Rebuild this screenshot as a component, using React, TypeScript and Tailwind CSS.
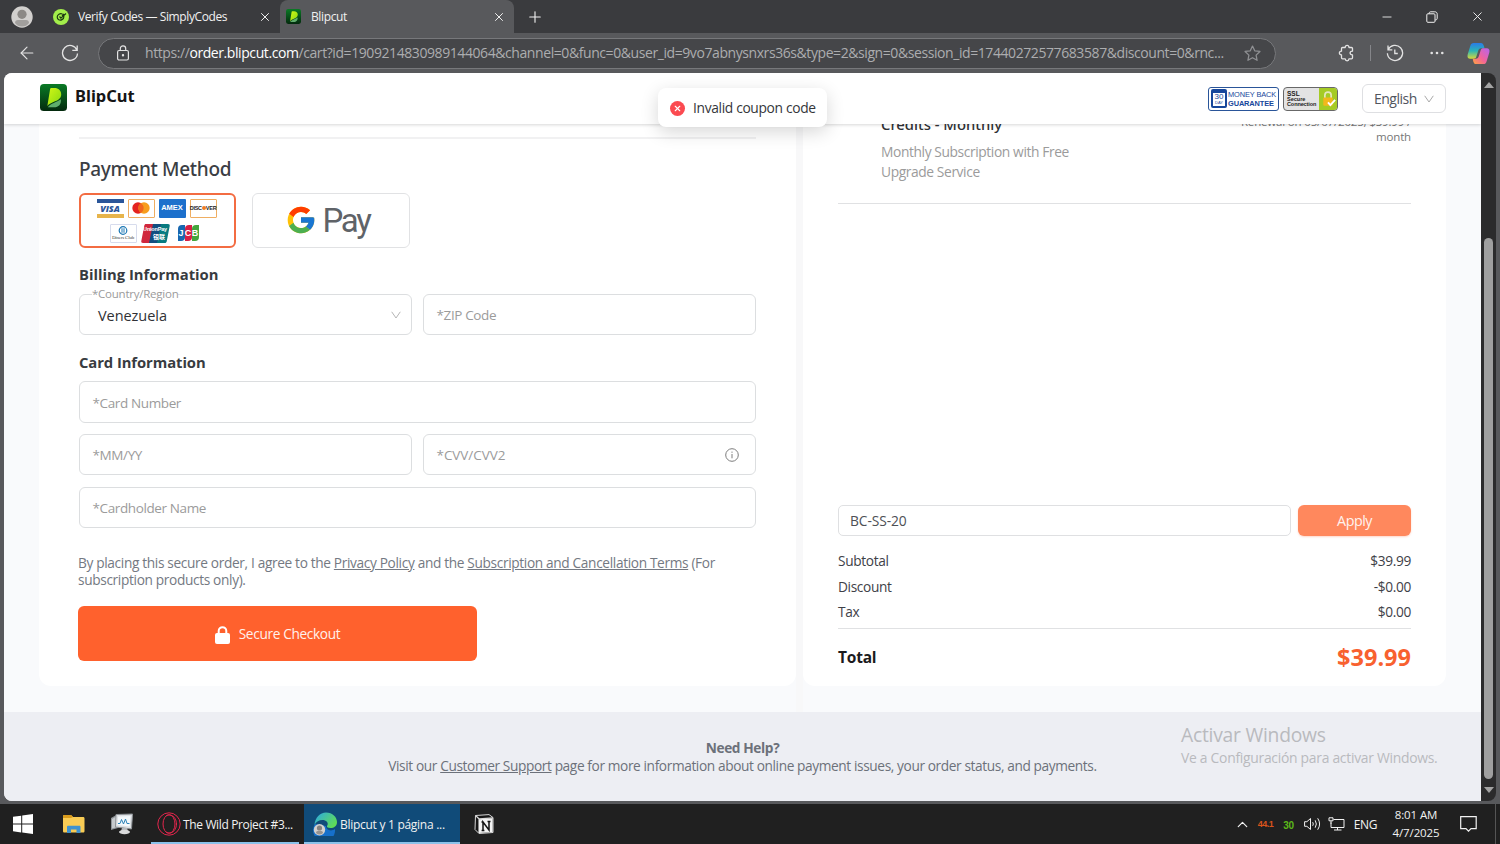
import type { ReactNode } from "react"
import { ArrowLeft, ChevronUp, Minus, Plus, X } from "lucide-react"
import { FcGoogle } from "react-icons/fc"

function BlipcutLogo({ className }: { className?: string }) {
  return (
    <svg viewBox="0 0 28 28" className={className}>
      <defs>
        <linearGradient id="logo-bg" x1="0" y1="0" x2="0" y2="1">
          <stop offset="0" stopColor="#0a7a25" />
          <stop offset="1" stopColor="#03290d" />
        </linearGradient>
        <linearGradient id="logo-leaf" x1="0" y1="0" x2="1" y2="1">
          <stop offset="0" stopColor="#d2f716" />
          <stop offset="1" stopColor="#86d911" />
        </linearGradient>
      </defs>
      <rect width="28" height="28" rx="4" fill="url(#logo-bg)" />
      <path d="M10.500 5.200c.1-.7.5-1 1.200-1h3.300c4.200 0 7 2.600 7 6.600 0 3.800-3 5.800-7 7.400-3 1.200-5.600 2.500-7.400 4.600z" fill="url(#logo-leaf)" />
      <path d="M8 24c3-4.200 9.500-5 13.600-8.300.8 5-2.400 8.500-7 8.500H8z" fill="#5fae6c" />
    </svg>
  )
}

function DownCaret({ className }: { className?: string }) {
  return (
    <svg viewBox="0 0 10 8" fill="none" stroke="currentColor" className={className}>
      <path d="M.7 .8 5 7 9.300 .8" />
    </svg>
  )
}

function TabBar() {
  return (
    <div className="flex h-[33px] bg-[#3a3b3e] text-[12px] text-[#f1f1f1]">
      <div className="flex w-[43px] items-center justify-center">
        <svg viewBox="0 0 22 22" className="size-[22px]">
          <circle cx="11" cy="11" r="10.700" fill="#d2d0ce" />
          <circle cx="11" cy="8.300" r="4.600" fill="#8c8986" />
          <path d="M4 17c0-2 1.200-3 3-3h8c1.800 0 3 1 3 3-1.700 2.300-4 3.600-7 3.600S5.700 19.300 4 17z" fill="#a19f9d" />
        </svg>
      </div>
      <div className="flex w-[237px] items-center pr-2 pl-[10px]">
        <svg viewBox="0 0 16 16" className="size-4">
          <circle cx="8" cy="8" r="8" fill="#a3ee4b" />
          <path d="M9.500 5C7 4 4.200 5.500 4.200 8s2.500 3.800 4.800 2.600c1.500-.8 2-2 2-3.300M6.500 7.500l1.400 1.600L13 4.500M9 6.800l2-1.800" fill="none" stroke="#1c3a12" strokeWidth="1.200" />
        </svg>
        <span className="ml-[9px] flex-1 tracking-[-0.4px] whitespace-nowrap">Verify Codes — SimplyCodes</span>
        <X className="size-[14px]" strokeWidth={1.700} />
      </div>
      <div className="flex w-[234px] items-center rounded-t-lg bg-[#58595c] pr-2 pl-[6px]">
        <BlipcutLogo className="size-[15px]" />
        <span className="ml-[10px] flex-1 tracking-[-0.38px]">Blipcut</span>
        <X className="size-[14px]" strokeWidth={1.700} />
      </div>
      <Plus className="mt-2 ml-[12px] size-[18px]" strokeWidth={1.500} />
      <div className="ml-auto flex items-center">
        <Minus className="mr-[32px] size-[14px]" strokeWidth={1.500} />
        <svg viewBox="0 0 12 12" fill="none" stroke="currentColor" className="mr-[32px] size-3">
          <rect x=".8" y="2.800" width="8.200" height="8.500" rx="1" />
          <path d="M3 2.800c0-1.300.6-2 1.800-2h4c1.500 0 2.400.9 2.400 2.400v4c0 1.200-.7 1.800-2 1.800" />
        </svg>
        <X className="mr-[15px] size-[15px]" strokeWidth={1.500} />
      </div>
    </div>
  )
}

function Toolbar() {
  return (
    <div className="flex h-10 items-center bg-[#58595c] text-[#e3e3e3]">
      <ArrowLeft className="ml-[17px] size-5" strokeWidth={1.400} />
      <svg viewBox="0 0 18 18" fill="none" stroke="currentColor" strokeWidth="1.300" className="ml-[24px] size-[18px]">
        <path d="M16 6.200A7.500 7.500 0 1 0 16.500 9.500M16.200 1.500v4.900h-4.900" />
      </svg>
      <div className="ml-[19px] flex h-[31px] w-[1178px] items-center rounded-full border border-[#77787b] bg-[#454649] pr-[14px] pl-[17px]">
        <svg viewBox="0 0 14 16" fill="none" stroke="currentColor" strokeWidth="1.200" className="h-4 w-[14px]">
          <rect x="1.600" y="5.500" width="10.800" height="9.500" rx="1.500" />
          <path d="M4.300 5.500V3.600a2.700 2.700 0 0 1 5.400 0v1.900" />
          <circle cx="7" cy="10.200" r=".6" fill="currentColor" />
        </svg>
        <div className="-mt-[2px] ml-[15px] w-[1084px] text-[14px] tracking-[-0.42px] whitespace-nowrap text-[#acadaf]">
          https://<span className="text-white">order.blipcut.com</span>
          /cart?id=1909214830989144064&amp;channel=0&amp;func=0&amp;user_id=9vo7abnysnxrs36s&amp;type=2&amp;sign=0&amp;session_id=17440272577683587&amp;discount=0&amp;rnc...
        </div>
        <svg viewBox="0 0 16 16" fill="none" stroke="#8f9093" strokeWidth="1.200" strokeLinejoin="round" className="ml-auto size-[17px]">
          <path d="m8 1 2.100 4.500 4.900.6-3.600 3.400.9 4.900L8 12l-4.300 2.400.9-4.900L1 6.100l4.900-.6z" />
        </svg>
      </div>
      <svg viewBox="0 0 18 18" fill="none" stroke="currentColor" strokeWidth="1.300" strokeLinejoin="round" className="ml-[62px] size-[18px]">
        <path d="M4.500 3.500h2.700c.1-1.400.8-2.100 1.900-2.100s1.800.7 1.900 2.100h2.500c.6 0 1 .4 1 1v2.700c-1.500.1-2.400.8-2.400 1.900s.9 1.800 2.400 1.900v2.800c0 .6-.4 1-1 1H11c-.1 1.300-.8 2-1.900 2s-1.800-.7-1.900-2H4.500c-.6 0-1-.4-1-1V11c-1.400-.1-2.100-.8-2.100-1.900s.7-1.800 2.100-1.900V4.500c0-.6.4-1 1-1z" />
      </svg>
      <div className="ml-[14px] h-4 w-px bg-[#85868a]" />
      <svg viewBox="0 0 18 18" fill="none" stroke="currentColor" strokeWidth="1.300" className="ml-[15px] size-[18px]">
        <path d="M2.200 5.500a7.600 7.600 0 1 1-.8 3.700M2 1.500v4.300h4.300M8.800 5.500v4h3" />
      </svg>
      <svg viewBox="0 0 14 4" fill="currentColor" className="ml-[26px] h-1 w-[14px]">
        <circle cx="1.700" cy="2" r="1.300" />
        <circle cx="7" cy="2" r="1.300" />
        <circle cx="12.300" cy="2" r="1.300" />
      </svg>
      <svg viewBox="0 0 24 24" className="mr-[10px] ml-auto size-[23px]">
        <defs>
          <linearGradient id="cop-a" x1="0" y1="0" x2="0" y2="1">
            <stop offset="0" stopColor="#2a7be8" />
            <stop offset=".5" stopColor="#2bb5b5" />
            <stop offset="1" stopColor="#d8d93a" />
          </linearGradient>
          <linearGradient id="cop-b" x1="1" y1="0" x2="0" y2="1">
            <stop offset="0" stopColor="#b564f0" />
            <stop offset=".55" stopColor="#f2639b" />
            <stop offset="1" stopColor="#ffa43d" />
          </linearGradient>
        </defs>
        <path d="M7 1h7.500c2 0 2.500 1.500 3 3l.8 2.500h-3.600c-1.800 0-2.500 1-3 2.600l-2 6.400c-.5 1.600-1.300 2-3 2H3.500C1 17.500 0 15.700.7 13L3.500 4C4.100 2 5 1 7 1z" fill="url(#cop-a)" />
        <path d="M17 23H9.500c-2 0-2.500-1.500-3-3l-.5-2.500h3.300c1.800 0 2.500-1 3-2.600l2-6.400c.5-1.600 1.300-2 3-2h3.200c2.500 0 3.500 1.800 2.800 4.500L20.500 20c-.6 2-1.500 3-3.500 3z" fill="url(#cop-b)" />
      </svg>
    </div>
  )
}

function MoneyBackBadge() {
  return (
    <div className="flex h-6 w-[71px] items-center rounded-[3px] border border-[#2a5599] bg-white pl-[2px] text-[#17479b]">
      <div className="flex h-[19px] w-4 flex-col items-center rounded-[2px] bg-[#17479b] pt-[4px]">
        <div className="h-[13px] w-3 bg-white text-center font-['Liberation_Sans'] text-[8px] leading-[8px]">
          30
          <div className="text-[4px] leading-[4px]">DAY</div>
        </div>
      </div>
      <div className="ml-px font-['Liberation_Sans'] leading-[9px] whitespace-nowrap">
        <div className="text-[7.400px] tracking-[-0.1px]">MONEY BACK</div>
        <div className="text-[7.400px] font-bold tracking-[-0.1px]">GUARANTEE</div>
      </div>
    </div>
  )
}

function SslBadge() {
  return (
    <div className="flex h-6 w-[55px] overflow-hidden rounded-[4px] border border-[#686868] bg-[#e3e3e3]">
      <div className="w-[35px] pt-[2px] pl-[3px] font-['Liberation_Sans'] text-[5.500px] leading-[5.500px] font-bold whitespace-nowrap text-[#222]">
        <div className="text-[6.500px] leading-[7px]">SSL</div>
        <div>Secure</div>
        <div className="tracking-[-0.1px]">Connection</div>
      </div>
      <div className="flex-1 bg-[#a5cb25]">
        <svg viewBox="0 0 19 22" className="h-[22px] w-[18px]">
          <path d="M6.200 10V7a3.300 3.300 0 0 1 6.600 0v3" fill="none" stroke="#e4e7bd" strokeWidth="1.800" />
          <rect x="4.500" y="9.500" width="10" height="8.500" rx="1" fill="#f3b71c" />
          <path d="m9.500 14.500 2.500 3 5-5.500" fill="none" stroke="#fff" strokeWidth="2" />
        </svg>
      </div>
    </div>
  )
}

function PageHeader() {
  return (
    <header className="relative flex h-[51px] shrink-0 items-center bg-white pl-9 shadow-[0_1px_3px_rgba(0,0,0,0.16)]">
      <BlipcutLogo className="-mt-[2px] size-[27px]" />
      <span className="-mt-[5px] ml-[8px] font-['Noto_Sans'] text-[16.500px] font-bold text-[#151515]">BlipCut</span>
      <div className="mr-[35px] ml-auto flex items-center">
        <MoneyBackBadge />
        <div className="ml-[4px]">
          <SslBadge />
        </div>
        <div className="ml-[24px] flex h-[29px] w-[84px] items-center justify-between rounded-md border border-[#dedfe2] pr-[11px] pl-[11px] text-[14px] tracking-[-0.5px] text-[#51555d]">
          English
          <DownCaret className="h-2 w-[10px] text-[#a9a9a9]" />
        </div>
      </div>
    </header>
  )
}

function CardBrands() {
  return (
    <div className="flex h-[55px] w-[157px] flex-col items-center justify-center gap-[6px] rounded-md border-2 border-[#f36c42] bg-white">
      <div className="-ml-[2px] flex gap-[4px]">
        <div className="flex h-[19px] w-[27px] flex-col justify-between bg-white">
          <div className="h-1 bg-[#2a5599]" />
          <div className="text-center font-['Open_Sans'] text-[9px] leading-[9px] font-extrabold text-[#2a5599] italic">VISA</div>
          <div className="h-1 bg-[#e7b44b]" />
        </div>
        <div className="flex h-[19px] w-[27px] items-center justify-center rounded-[1px] border border-[#efae62]">
          <svg viewBox="0 0 18 12" className="h-3 w-[18px]">
            <circle cx="6" cy="6" r="5.700" fill="#e42320" />
            <circle cx="12" cy="6" r="5.700" fill="#f79d1d" />
            <path d="M9 1.200a5.700 5.700 0 0 1 0 9.600 5.700 5.700 0 0 1 0-9.600z" fill="#f1661e" />
          </svg>
        </div>
        <div className="flex h-[19px] w-[27px] items-center justify-center rounded-[1px] bg-[#1c70cc] font-['Liberation_Sans'] text-[7.500px] font-bold text-white">AMEX</div>
        <div className="flex h-[19px] w-[27px] items-center justify-center rounded-[1px] border border-[#efae62] font-['Liberation_Sans'] text-[5.500px] font-bold tracking-[-0.25px] text-[#222]">
          DISC
          <span className="size-[4px] shrink-0 rounded-full bg-[#ef7b20]" />
          VER
        </div>
      </div>
      <div className="-ml-[7px] flex gap-[4px]">
        <div className="flex h-[19px] w-[27px] flex-col items-center justify-center rounded-[1px] border border-[#d7dced]">
          <svg viewBox="0 0 10 9" className="h-[9px] w-[10px]">
            <circle cx="5" cy="4.500" r="3.800" fill="#fff" stroke="#1d78b5" strokeWidth="1.200" />
            <path d="M4 2.200v4.600M6 2.200v4.600" stroke="#1d78b5" />
          </svg>
          <div className="font-['Liberation_Serif'] text-[5px] leading-[5px] tracking-[-0.2px] whitespace-nowrap text-[#444]">Diners Club</div>
        </div>
        <div className="relative flex h-[19px] w-[29px] flex-col items-center justify-center">
          <svg viewBox="0 0 29 19" className="absolute inset-0 h-[19px] w-[29px]">
            <path d="M5 0h9l-4 19H2c-1.300 0-2-.7-1.700-2L3.300 1.500C3.500.6 4 0 5 0z" fill="#d0273d" />
            <path d="M12 0h9l-4 19H8z" fill="#134e80" />
            <path d="M20 0h7c1.300 0 2 .7 1.700 2l-3 15.500c-.2.900-.8 1.500-1.700 1.500h-8z" fill="#087b80" />
          </svg>
          <span className="relative font-['Liberation_Sans'] text-[5.500px] leading-[7px] font-bold tracking-[-0.2px] text-white">UnionPay</span>
          <span className="relative ml-2 font-['Noto_Sans_CJK_SC'] text-[6px] leading-[7px] font-bold text-white">银联</span>
        </div>
        <div className="ml-[4px] flex h-[16px] w-[21px] items-stretch self-center font-['Liberation_Sans'] text-[9px] leading-[16px] font-bold text-white">
          <span className="flex-1 rounded-tl-[4px] rounded-br-[4px] bg-[#1767b0] text-center">J</span>
          <span className="flex-1 rounded-tl-[4px] rounded-br-[4px] bg-[#d71e44] text-center">C</span>
          <span className="flex-1 rounded-tl-[4px] rounded-br-[4px] bg-[#43a63d] text-center">B</span>
        </div>
      </div>
    </div>
  )
}

function Field({ className = "", children }: { className?: string; children: ReactNode }) {
  return (
    <div className={`flex h-[41px] items-center rounded-md border border-[#dcdee0] bg-white px-[12.500px] pt-[2px] text-[13.500px] tracking-[-0.38px] text-[#9b9b9b] ${className}`}>
      {children}
    </div>
  )
}

function PaymentCard() {
  return (
    <section className="h-[562px] w-[757px] rounded-b-xl bg-white px-10 pt-[13px]">
      <div className="h-[2px] bg-[#f1f1f2]" />
      <h2 className="mt-4 font-['Noto_Sans'] text-[19px] leading-7 font-medium tracking-[-0.3px] text-[#3b3e44]">Payment Method</h2>
      <div className="mt-[10px] flex gap-[15.500px]">
        <CardBrands />
        <div className="flex h-[55px] w-[158px] items-center justify-center gap-[5px] rounded-md border border-[#e1e2e4] pr-[6px]">
          <FcGoogle className="-mt-[2px] size-[32px]" />
          <span className="font-['Roboto'] text-[33px] leading-none tracking-[-2.300px] text-[#5f6368]">Pay</span>
        </div>
      </div>
      <h3 className="mt-[16px] text-[14.800px] leading-5 font-bold text-[#383b40]">Billing Information</h3>
      <div className="mt-[10px] flex gap-[11px]">
        <Field className="relative w-[333px] justify-between">
          <span className="absolute -top-[9px] left-[12px] bg-white text-[11.500px] leading-4 tracking-[-0.24px]">*Country/Region</span>
          <span className="pl-[5.500px] text-[14.500px] tracking-[-0.05px] text-[#303135]">Venezuela</span>
          <DownCaret className="-mt-[2px] -mr-[2px] h-2 w-[10px] text-[#b5b5b5]" />
        </Field>
        <Field className="w-[333px]">*ZIP Code</Field>
      </div>
      <h3 className="mt-[17px] text-[14.800px] leading-5 font-bold tracking-[-0.08px] text-[#383b40]">Card Information</h3>
      <Field className="mt-[9px] h-[42px]">*Card Number</Field>
      <div className="mt-[11px] flex gap-[11px]">
        <Field className="w-[333px]">*MM/YY</Field>
        <Field className="w-[333px] justify-between">
          <span className="tracking-[-0.05px]">*CVV/CVV2</span>
          <svg viewBox="0 0 14 14" fill="none" stroke="#7d7d7d" className="-mt-[2px] mr-[4px] size-[14px]">
            <circle cx="7" cy="7" r="6.300" />
            <path d="M7 6v4.300M7 3.600v1.200" />
          </svg>
        </Field>
      </div>
      <Field className="mt-3">*Cardholder Name</Field>
      <p className="mt-[26px] -ml-px text-[13.700px] leading-[17px] tracking-[-0.35px] whitespace-nowrap text-[#747982]">
        By placing this secure order, I agree to the <u>Privacy Policy</u> and the <u>Subscription and Cancellation Terms</u> (For
        <br />
        subscription products only).
      </p>
      <button className="mt-[18px] -ml-px flex h-[55px] w-[399px] items-center justify-center gap-[9px] rounded-md bg-[#ff612d] pt-[2px] text-[13.700px] tracking-[-0.36px] text-[#fff1ec]">
        <svg viewBox="0 0 15 18" className="h-[18px] w-[15px]">
          <path d="M3.700 8V5a3.800 3.800 0 0 1 7.600 0v3" fill="none" stroke="#fff" strokeWidth="2" />
          <rect y="7" width="15" height="11" rx="2" fill="#fff" />
        </svg>
        Secure Checkout
      </button>
    </section>
  )
}

const totals = [
  ["Subtotal", "$39.99"],
  ["Discount", "-$0.00"],
  ["Tax", "$0.00"],
]

function OrderSummary() {
  return (
    <section className="flex h-[562px] w-[643px] flex-col rounded-b-xl bg-white px-[35px]">
      <div className="-mt-[10px] flex h-[90px] justify-between border-b border-[#e0e1e3] pl-[43px]">
        <div>
          <div className="font-['Noto_Sans'] text-[14.800px] leading-5 font-medium text-[#2f3135]">Credits - Monthly</div>
          <div className="mt-[8px] text-[13.800px] leading-[19.500px] tracking-[-0.4px] text-[#9b9b9b]">
            Monthly Subscription with Free
            <br />
            Upgrade Service
          </div>
        </div>
        <div className="pt-[1px] text-right text-[11.500px] leading-[14.500px] tracking-[-0.17px] text-[#777]">
          Renewal on 05/07/2025, $39.99 /
          <br />
          month
        </div>
      </div>
      <div className="mt-[301px] flex gap-[7px]">
        <div className="flex h-[31px] w-[453px] items-center rounded-[5px] border border-[#dfe0e2] px-[11px] pt-px text-[13.800px] tracking-[-0.1px] text-[#4d5055]">BC-SS-20</div>
        <button className="h-[31px] w-[113px] rounded-md bg-[#ff885d] text-[14.300px] tracking-[-0.5px] text-[#fff3ee] shadow-[0_1px_2px_rgba(255,97,45,0.25)]">Apply</button>
      </div>
      <div className="mt-[12px] h-[81px] border-b border-[#e0e1e3] pt-px text-[13.700px] tracking-[-0.35px] text-[#3e4147]">
        {totals.map(([label, value]) => (
          <div key={label} className="flex h-[25.500px] items-center justify-between">
            <span>{label}</span>
            <span>{value}</span>
          </div>
        ))}
      </div>
      <div className="flex h-[57px] items-center justify-between font-bold">
        <span className="pt-px text-[15.500px] tracking-[-0.2px] text-[#1b1b1d]">Total</span>
        <span className="text-[23.500px] text-[#f8612f]">$39.99</span>
      </div>
    </section>
  )
}

function ScrollBar() {
  return (
    <div className="flex w-[15px] flex-col items-center overflow-hidden rounded-r-lg bg-[#2b2b2c] pt-[9px] pb-[8px]">
      <svg viewBox="0 0 10 6" className="h-[6px] w-[10px]">
        <path d="M5 0l5 6H0z" fill="#a3a3a3" />
      </svg>
      <div className="mt-[150px] h-[541px] w-[9px] rounded-full bg-[#9f9f9f]" />
      <svg viewBox="0 0 10 6" className="mt-auto h-[6px] w-[10px]">
        <path d="M5 6l5-6H0z" fill="#a3a3a3" />
      </svg>
    </div>
  )
}

function Taskbar() {
  return (
    <div className="flex h-10 items-center bg-[#202020] text-[12px] tracking-[-0.36px] text-[#f2f2f2]">
      <svg viewBox="0 0 20 20" fill="#fff" className="ml-[13px] size-5">
        <path d="M0 2.800 8.200 1.700v7.900H0zM9.200 1.500 20 0v9.600H9.200zM0 10.500h8.200v7.900L0 17.300zM9.200 10.500H20V20L9.200 18.500z" />
      </svg>
      <svg viewBox="0 0 22 18" className="ml-[30px] h-[18px] w-[22px]">
        <path d="M0 1.500C0 .5.500 0 1.500 0H8l2 2h10c1 0 1.500.5 1.500 1.500V16c0 1-.5 1.500-1.500 1.500H1.500C.5 17.500 0 17 0 16z" fill="#f9cc55" />
        <path d="M0 3h8l2-1-2-2H1.500C.5 0 0 .5 0 1.500z" fill="#d99b1c" />
        <path d="M4 18v-6c0-.8.4-1.300 1.300-1.300h11c.8 0 1.200.5 1.200 1.300v6h-4v-3.500H8V18z" fill="#3f92cf" />
      </svg>
      <svg viewBox="0 0 24 22" className="ml-[25px] h-[22px] w-6">
        <path d="m1 5 7-4v14l-7 2z" fill="#8f9498" />
        <path d="m2 6 5-3v11l-5 1.500z" fill="#c5c9cc" />
        <path d="M6 1.500 22.500 1l-1 15L5.500 14z" fill="#dde0e3" stroke="#8b9094" />
        <path d="M8 3.500 20.500 3l-.8 10.500L7.500 12z" fill="#f4f9fc" />
        <path d="M8 10.500h2l1.500-4 2 4.500 2-5 1.500 4.500h2.500" fill="none" stroke="#2c83b8" />
        <path d="M12 15h5l1 3h-7z" fill="#b5b8bb" />
        <ellipse cx="14.500" cy="19" rx="5.500" ry="2.200" fill="#d9dadb" />
      </svg>
      <div className="ml-[17px] flex h-10 w-[148px] items-center border-b-2 border-[#8cc2ea] pt-[2px] pl-[6px]">
        <svg viewBox="0 0 24 24" fill="none" stroke="#e2264d" className="size-6">
          <circle cx="12" cy="12" r="11.200" />
          <ellipse cx="12" cy="12" rx="6" ry="9.300" />
          <path d="M9 4c3-2 7-1 9 2.500 2 3.500 2 7.500 0 11-2 3.500-6 4.500-9 2.500" />
        </svg>
        <span className="mt-[2px] ml-[2px] whitespace-nowrap">The Wild Project #3...</span>
      </div>
      <div className="ml-[5px] flex h-10 w-[156px] items-center border-b-2 border-[#8cc2ea] bg-[#104b79] pt-[2px] pl-[9px]">
        <svg viewBox="0 0 26 24" className="h-6 w-[26px]">
          <defs>
            <linearGradient id="edge-top" x1="0" y1="0" x2="1" y2="0.600">
              <stop offset="0" stopColor="#2aa7e8" />
              <stop offset="1" stopColor="#5fdc57" />
            </linearGradient>
          </defs>
          <path d="M2 12a11 11 0 1 0 20 5c-4 3-9 1-9-3z" fill="#1670ca" />
          <path d="M1.500 13C2 5.500 7 .5 13 .5c6.500 0 11 4.500 11 9.500 0 4-3 6-6.500 6-2.500 0-4-1-3.500-2 1.500-2 .8-4.500-2-5.500-4-1.300-8.500.5-10.500 4.500z" fill="url(#edge-top)" />
          <circle cx="6.500" cy="17.700" r="5.700" fill="#d3d1cf" />
          <circle cx="6.500" cy="16" r="2.600" fill="#85827f" />
          <path d="M3 21c0-1.300.7-2 1.700-2h3.600c1 0 1.700.7 1.700 2-2.200 2-4.800 2-7 0z" fill="#96938f" />
        </svg>
        <span className="mt-[2px] ml-[1px] tracking-[-0.28px] whitespace-nowrap">Blipcut y 1 página ...</span>
      </div>
      {/* notion */}
      <svg viewBox="0 0 20 20" className="ml-[14px] size-5">
        <path d="M1.500 1.500 15 .6 19 3.500V18.500L5 19.500 1 15.500z" fill="#161616" stroke="#d7d7d7" strokeLinejoin="round" />
        <path d="M1.500 1.500 5 4.800 19 3.800M5 4.800v14.500" fill="none" stroke="#d7d7d7" strokeWidth="1.200" />
        <path d="M5 5.200 18.600 4.300V18L5 19z" fill="#f3f3f3" />
        <path d="M9 16.500V8l6 8V7.500M7.500 8h2M13.500 7.400h3M7.600 16.600h2.800" fill="none" stroke="#111" strokeWidth="1.500" />
      </svg>
      <ChevronUp className="ml-auto size-[17px]" strokeWidth={1.700} />
      <span className="mt-[2px] ml-[7px] font-['Liberation_Sans'] text-[9px] font-bold tracking-[-0.5px] text-[#d9541c]">44.1</span>
      <span className="mt-[2px] ml-[10px] font-['Liberation_Sans'] text-[10px] font-bold tracking-[-0.3px] text-[#5cb81a]">30</span>
      <svg viewBox="0 0 17 14" fill="none" stroke="currentColor" className="ml-[10px] h-[14px] w-[17px]">
        <path d="M.6 4.700h2.300L6.500 1.500v11L2.900 9.300H.6zM8.700 5.200q1.200 1.800 0 3.600M11.200 3.300q2.300 3.700 0 7.400M13.700 1.300q3.800 5.700 0 11.400" />
      </svg>
      <svg viewBox="0 0 17 14" fill="none" stroke="currentColor" className="ml-[7px] h-[14px] w-[17px]">
        <path d="M5.500 2.500h10.500v8H3v-5M9.500 10.500v2.500M6 13h7.500M1 .8h4v3H1zM3 3.800v3" />
      </svg>
      <span className="mt-px ml-[9px] text-[12px] tracking-[-0.4px]">ENG</span>
      <div className="ml-[15px] w-[48px] text-center text-[11.500px] leading-[18px] tracking-[-0.1px] whitespace-nowrap">
        8:01 AM
        <br />
        4/7/2025
      </div>
      <svg viewBox="0 0 17 16" fill="none" stroke="currentColor" strokeWidth="1.200" className="mr-[18px] ml-[20px] h-4 w-[17px]">
        <path d="M.7.7h15.500v12h-5.200l-2.500 2.500-2.500-2.500H.7z" />
      </svg>
      <div className="h-10 w-[5px] border-l border-[#555]" />
    </div>
  )
}

export default function App() {
  return (
    <div className="flex h-[844px] w-[1500px] flex-col overflow-hidden bg-[#58595c] font-['Open_Sans',sans-serif]">
      <TabBar />
      <Toolbar />
      <div className="flex h-[728px] px-1">
        <div className="relative flex w-[1477px] flex-col overflow-hidden rounded-l-lg bg-[#f9fafc]">
          <div className="relative z-10">
            <PageHeader />
          </div>
          <main className="flex h-[588px] shrink-0 pl-[35px]">
            <PaymentCard />
            <div className="h-full w-[7px] bg-[#f8f8f9]" />
            <OrderSummary />
          </main>
          <footer className="h-[89px] bg-[#edeef3] pt-[27px] text-center text-[13.700px] leading-[17.500px] tracking-[-0.39px] text-[#6c717a]">
            <div className="font-bold">Need Help?</div>
            <div>
              Visit our <u>Customer Support</u> page for more information about online payment issues, your order status, and payments.
            </div>
          </footer>
          <div className="absolute top-[15px] left-[654px] z-20 flex h-[39px] w-[169px] items-center rounded-lg bg-white pt-[2px] pl-3 text-[13.800px] tracking-[-0.34px] text-[#34363a] shadow-[0_5px_18px_rgba(0,0,0,0.16)]">
            <span className="mr-[8px] flex size-[15px] items-center justify-center rounded-full bg-[#fb4a50]">
              <X className="size-[9px] text-white" strokeWidth={3} />
            </span>
            Invalid coupon code
          </div>
          <div className="absolute top-[649px] left-[1177px] whitespace-nowrap text-[#b9babe]">
            <div className="text-[19.300px] leading-[26px] tracking-[-0.25px]">Activar Windows</div>
            <div className="text-[13.900px] leading-5 tracking-[-0.28px]">Ve a Configuración para activar Windows.</div>
          </div>
        </div>
        <ScrollBar />
      </div>
      <div className="h-[3px] bg-[#58595c]" />
      <Taskbar />
    </div>
  )
}
